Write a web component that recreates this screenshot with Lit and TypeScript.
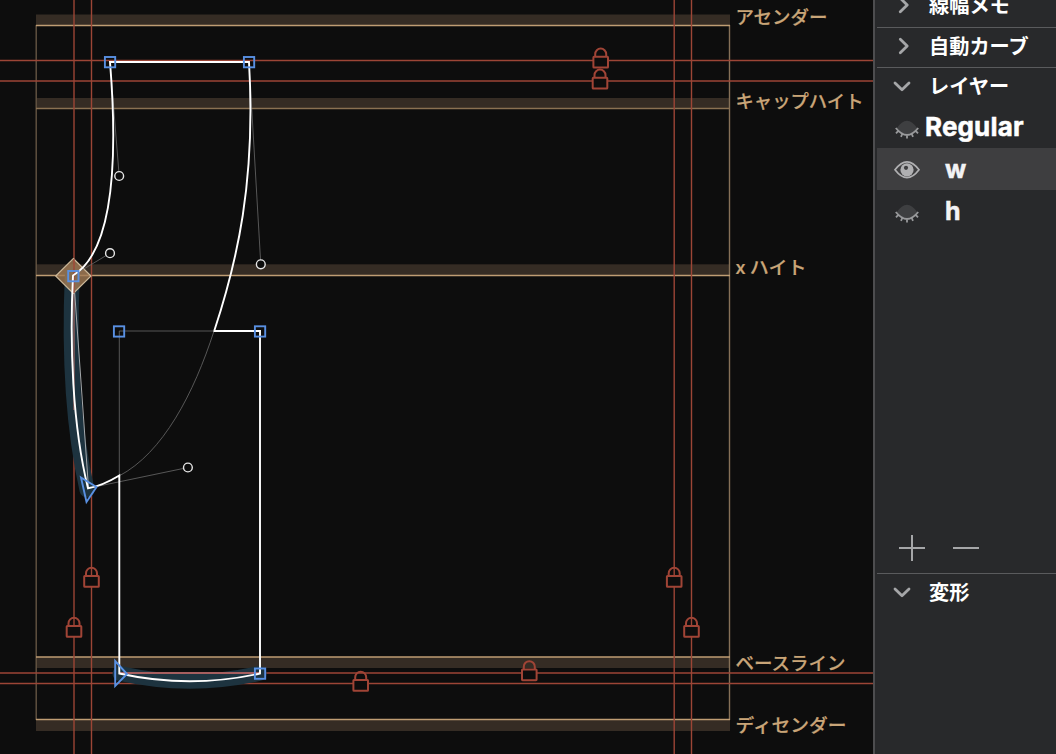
import { LitElement, html, svg, css } from "lit";
import { customElement, property } from "lit/decorators.js";
import { classMap } from "lit/directives/class-map.js";

interface Metric { label: string; band: number; h: number; line: number; text: number; width: number; dim?: boolean }

const METRICS: Metric[] = [
  { label: "アセンダー", band: 14.5, h: 11, line: 25.5, text: 24, width: 92 },
  { label: "キャップハイト", band: 98, h: 11, line: 108.5, text: 108, width: 128, dim: true },
  { label: "x ハイト", band: 264.3, h: 11, line: 275.5, text: 274, width: 71 },
  { label: "ベースライン", band: 657, h: 11, line: 657, text: 670, width: 110 },
  { label: "ディセンダー", band: 719.5, h: 11.5, line: 719.5, text: 732, width: 111 },
];
const GUIDES_V = [74, 91.5, 674.2, 691.5];
const GUIDES_H = [60.5, 81, 673, 683.5];
const LOCKS: [number, number][] = [
  [600.7, 47.6], [600, 68.6], [91.5, 566.8], [74, 616.8], [674.2, 566.8], [691.5, 616.8], [529.3, 660.2], [360.7, 670.8],
];
const NODES: [number, number][] = [[110, 62], [249, 62], [73.3, 276], [119, 331.3], [260, 331.3], [260, 673.5]];
const HANDLES: [number, number][] = [[119.2, 176], [110, 253.2], [260.8, 264.3], [187.9, 467.5]];

@customElement("glyph-canvas")
class GlyphCanvas extends LitElement {
  static styles = css`
    :host { display: block; background: #0d0d0d; overflow: hidden; }
    svg { display: block; }
    .label { font: 500 18.3px "Noto Sans CJK JP", sans-serif; fill: #c9a578; stroke: #c9a578; stroke-width: .2; }
    .band { fill: #352c24; }
    .metric { stroke: #bf9d73; stroke-width: 1.3; }
    .metric.dim { stroke: #8a7152; }
    .frame { stroke: #857057; stroke-width: 1.4; }
    .frame.left { stroke: #655543; }
    .guide { stroke: #9c4536; stroke-width: 1.4; }
    .lock { fill: none; stroke: #a04436; stroke-width: 2; }
    .teal { fill: none; stroke: #1d333f; stroke-width: 15; stroke-linecap: round; }
    .outline { fill: none; stroke: #fff; stroke-width: 1.9; stroke-linejoin: miter; }
    .thin { fill: none; stroke: #6a6a6a; stroke-width: .8; }
    .chord { fill: none; stroke: #a5a9ac; stroke-width: 1; }
    .node { fill: none; stroke: #5990e2; stroke-width: 1.9; }
    .handle { fill: #0d0d0d; stroke: #e6e6e6; stroke-width: 1.4; }
    .diamond { fill: #a27c55; fill-opacity: .8; stroke: #cbb899; stroke-width: 1.2; }
    .pink { stroke: #a65f5f; stroke-width: 1.8; }
    .pink.soft { stroke: #755657; }
  `;
  render() {
    return html`<svg width="873" height="754" viewBox="0 0 873 754">
      ${METRICS.map(m => svg`<rect class="band" x="36" y=${m.band} width="694" height=${m.h} />`)}
      <path class="frame left" d="M36.2 25V720" /><path class="frame" d="M729.5 25V720" />
      ${METRICS.map(m => svg`<path class=${m.dim ? "metric dim" : "metric"} d="M36 ${m.line}H730" />
        <text class="label" x="735.5" y=${m.text} textLength=${m.width} lengthAdjust="spacingAndGlyphs">${m.label}</text>`)}
      ${GUIDES_V.map(x => svg`<path class="guide" d="M${x} 0V754" />`)}
      ${GUIDES_H.map(y => svg`<path class="guide" d="M0 ${y}H873" />`)}
      ${LOCKS.map(([x, y]) => svg`<g class="lock" transform="translate(${x} ${y})">
        <rect fill="#0d0d0d" x="-7.3" y="9.2" width="14.6" height="10.8" rx=".6" />
        <path d="M-5.5 9V6.5a5.5 5.5 0 0 1 11 0V9" /></g>`)}
      <path class="teal" d="M72.3 275C69.3 345 72.3 425 87 490" />
      <path class="teal" d="M120 673.5Q190 689 259 673.5" />
      <path class="pink soft" d="M74 276V410" />
      <path class="pink" d="M120 673H260" />
      <path class="chord" d="M73.5 276L88.5 488" />
      <path class="diamond" d="M73.3 258.5L91 276L73.3 293.5L55.7 276Z" />
      <path class="guide" d="M74 259V293" />
      <path class="thin" d="M110 62L119.2 176M73 275.5L110 253.2M249 62L260.8 264.3M88 488.3L187.9 467.5" />
      <path class="thin" d="M214 331H119.3V476M214 331C194 393 163 453 119 476" />
      <path class="outline" d="M214.2 331C237 262 256 181 249 62H110C119.2 176 110 253.2 73 275.5C69.5 345 72.5 425 88 488.3Q102 486 119.3 475.5V673.5Q190 689 260 673.5V331H213.5" />
      ${NODES.map(([x, y]) => svg`<rect class="node" x=${x - 5.1} y=${y - 5} width="10.3" height="10.3" />`)}
      ${HANDLES.map(([x, y]) => svg`<circle class="handle" cx=${x} cy=${y} r="4.4" />`)}
      <path class="node" d="M81 477.5L96.5 487L86.5 502Z" />
      <path class="node" d="M115.2 661V686L127 674Z" />
    </svg>`;
  }
}

@customElement("section-title")
class SectionTitle extends LitElement {
  @property({ type: Boolean }) open = false;
  @property() label = "";
  static styles = css`
    :host { display: flex; align-items: center; box-sizing: border-box; padding: 0 0 3px 13px; gap: 11px; }
    .icon { width: 28px; height: 20px; fill: none; stroke: #a5a6a8; stroke-width: 2.8; stroke-linecap: round; stroke-linejoin: round; }
    .text { font: 700 20.2px/30px "Noto Sans CJK JP", sans-serif; color: #fff; white-space: nowrap; }
  `;
  render() {
    return html`<svg class="icon" viewBox="0 0 28 20"><path d=${this.open ? "M5 7L12 13.8L19 7" : "M10.3 3.2L17.2 10L10.3 16.8"} /></svg>
      <span class="text">${this.label}</span>`;
  }
}

@customElement("layer-row")
class LayerRow extends LitElement {
  @property() name = "";
  @property({ type: Boolean }) shown = false;
  @property({ type: Boolean }) master = false;
  static styles = css`
    .row { display: flex; align-items: center; height: 42px; padding-left: 17px; }
    .row.shown { background: #3e3e40; }
    .eye { width: 26px; height: 22px; flex: none; overflow: visible; }
    .name { font: 700 25px/42px Inter, sans-serif; color: #f3f3f5; margin-left: 25px; -webkit-text-stroke: .5px currentColor; }
    .name.master { margin-left: 5px; font-size: 26px; color: #fff; letter-spacing: .15px; }
  `;
  render() {
    const open = svg`<path d="M1 11.8Q13-4 25 11.8Q13 27.6 1 11.8Z" fill="none" stroke="#b0b0b2" stroke-width="1.7"/>
      <circle cx="13" cy="11.8" r="6.6" fill="#b0b0b2"/><circle cx="12" cy="9.8" r="2.1" fill="#3e3e40"/>`;
    const shut = svg`<path d="M2.5 12.5Q13-3 23.5 12.5Q13 24.5 2.5 12.5Z" fill="#3e3f41"/>
      <path d="M1.8 12Q13 26 24.2 12M4.3 14.8L2 17.4M8.3 17.8L7 20.8M13 19V22.4M17.7 17.8L19 20.8M21.7 14.8L24 17.4" fill="none" stroke="#98999b" stroke-width="1.8"/>`;
    return html`<div class=${classMap({ row: true, shown: this.shown })}>
      <svg class="eye" viewBox="0 0 26 22">${this.shown ? open : shut}</svg>
      <span class=${classMap({ name: true, master: this.master })}>${this.name}</span></div>`;
  }
}

@customElement("app-root")
class AppRoot extends LitElement {
  static styles = css`
    :host { display: grid; grid-template-columns: 873px 183px; height: 754px; overflow: hidden; background: #0d0d0d; }
    .panel { box-sizing: border-box; background: #28292b; border-left: 2px solid #4d4d4f; padding-left: 2px; display: flex; flex-direction: column; overflow: hidden; min-width: 0; }
    .first { margin-top: -14px; height: 41px; flex: none; }
    .line { height: 1px; background: #5a5b5d; flex: none; }
    .second { height: 39px; flex: none; }
    .third { height: 38px; flex: none; }
    .layers { height: 467px; display: flex; flex-direction: column; flex: none; }
    .tools { margin-top: auto; height: 50px; display: flex; align-items: center; gap: 28px; padding-left: 22px; }
    .tool { width: 26px; height: 26px; stroke: #a5a6a8; stroke-width: 2; }
  `;
  render() {
    return html`<glyph-canvas></glyph-canvas>
      <aside class="panel">
        <section-title class="first" label="線幅メモ"></section-title>
        <div class="line"></div>
        <section-title class="second" label="自動カーブ"></section-title>
        <div class="line"></div>
        <section-title class="third" open label="レイヤー"></section-title>
        <div class="layers">
          <layer-row name="Regular" master></layer-row>
          <layer-row name="w" shown></layer-row>
          <layer-row name="h"></layer-row>
          <div class="tools">
            <svg class="tool" viewBox="0 0 26 26"><path d="M0 13H26M13 0V26" /></svg>
            <svg class="tool" viewBox="0 0 26 26"><path d="M0 13H26" /></svg>
          </div>
        </div>
        <div class="line"></div>
        <section-title class="second" open label="変形"></section-title>
      </aside>`;
  }
}
